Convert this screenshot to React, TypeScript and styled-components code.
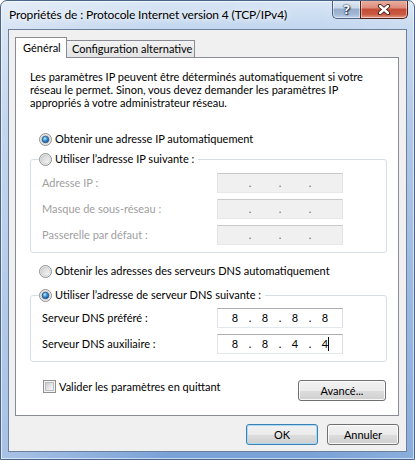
import React, { useId } from "react";
import styled, { createGlobalStyle, css } from "styled-components";

const FONT = `"Segoe UI", Lato, "Noto Sans", sans-serif`;

const Global = createGlobalStyle`
  html, body { margin: 0; padding: 0; background: #ffffff; }
  body { font-family: ${FONT}; }
  #root { width: 415px; height: 460px; }
`;

const Window = styled.div`
  box-sizing: border-box;
  width: 415px;
  height: 460px;
  display: flex;
  flex-direction: column;
  border: 1px solid #4a6488;
  border-radius: 7px 7px 0 0;
  background:
    linear-gradient(to right, rgba(255,255,255,0.35), rgba(255,255,255,0) 40%, rgba(255,255,255,0) 75%, rgba(255,255,255,0.12)),
    linear-gradient(to bottom, #d8e6f5 0px, #c3d7ef 26px, #a7c2e6 120px, #8cb0df 300px, #7aa2d8 460px);
  box-shadow: inset 0 0 0 1px rgba(255,255,255,0.6);
  font-family: ${FONT};
  color: #000;
  overflow: hidden;
`;

const TitleBar = styled.div`
  display: flex;
  align-items: flex-start;
  flex: none;
  height: 28px;
  padding: 0 6px 0 8px;
`;

const Title = styled.div`
  align-self: center;
  font-size: 12px;
  line-height: 16px;
  letter-spacing: -0.15px;
  white-space: nowrap;
  color: #000;
  text-shadow: 0 0 6px #fff, 0 0 10px rgba(255,255,255,0.9);
`;

const CaptionButtons = styled.div`
  display: flex;
  margin-left: auto;
  margin-top: -1px;
`;

const captionBase = css`
  box-sizing: border-box;
  height: 19px;
  display: flex;
  align-items: center;
  justify-content: center;
  border: 1px solid;
  border-top: none;
  box-shadow: inset 0 0 0 1px rgba(255,255,255,0.45);
`;

const HelpButton = styled.div`
  ${captionBase};
  width: 28px;
  border-color: #4f6482;
  border-right: none;
  border-radius: 0 0 0 5px;
  background: linear-gradient(#e3ebf5 0%, #c9d7e9 45%, #95acca 50%, #a2b8d5 80%, #c3d4ea 100%);
  color: #fff;
  font: bold 13px "Noto Sans", sans-serif;
  text-shadow: 0 0 1px #1d2b40, 0 0 2px #1d2b40, 1px 1px 1px #2c3d56;
`;

const CloseButton = styled.div`
  ${captionBase};
  width: 48px;
  border-color: #4f1e18;
  border-radius: 0 0 5px 0;
  background: linear-gradient(#ebb2a4 0%, #dc8b7a 45%, #c54b36 50%, #c95942 80%, #e6a088 100%);
`;

const Client = styled.div`
  flex: 1;
  box-sizing: border-box;
  margin: 0 7px 7px;
  border: 1px solid #6d809b;
  background: #f0f0f0;
  display: flex;
  flex-direction: column;
  padding: 7px 0 0 6px;
`;

const TabStrip = styled.div`
  display: flex;
  align-items: flex-end;
  flex: none;
  height: 20px;
`;

const Tab = styled.div<{ $active?: boolean }>`
  box-sizing: border-box;
  font-size: 11px;
  line-height: 15px;
  white-space: nowrap;
  border: 1px solid #898c95;
  border-bottom: none;
  ${(p) =>
    p.$active
      ? css`
          width: 52px;
          height: 21px;
          margin-bottom: -1px;
          padding: 2px 0 0 7px;
          background: #ffffff;
          position: relative;
          z-index: 1;
        `
      : css`
          width: 128px;
          height: 17px;
          padding: 0 0 0 5px;
          border-left: none;
          background: linear-gradient(#f3f3f3, #e3e3e3);
        `}
`;

const Panel = styled.div`
  box-sizing: border-box;
  flex: none;
  width: 384px;
  height: 359px;
  border: 1px solid #898c95;
  background: #ffffff;
  padding: 12px 0 0 14px;
  display: flex;
  flex-direction: column;
  align-items: flex-start;
`;

const Intro = styled.p`
  margin: 0;
  font-size: 11px;
  line-height: 13px;
  white-space: nowrap;
`;

const Option = styled.label<{ $mt?: number; $ml?: number }>`
  display: flex;
  align-items: center;
  gap: 3px;
  height: 16px;
  margin: ${(p) => p.$mt ?? 0}px 0 0 ${(p) => p.$ml ?? 9}px;
  font-size: 11px;
  line-height: 16px;
  white-space: nowrap;
  cursor: default;
`;

const RadioSvg = styled.svg`
  display: block;
  flex: none;
`;

const Group = styled.fieldset<{ $mt: number; $pt: number }>`
  box-sizing: border-box;
  width: 357px;
  min-width: 0;
  margin: ${(p) => p.$mt}px 0 0 0;
  padding: ${(p) => p.$pt}px 0 7px 8px;
  border: 1px solid #d5dfe5;
  border-radius: 3px;
`;

const Legend = styled.legend`
  margin: 0;
  padding: 0 4px 0 0;
`;

const Rows = styled.div`
  display: flex;
  flex-direction: column;
  gap: 6px;
`;

const FieldRow = styled.div`
  display: flex;
  align-items: center;
  height: 20px;
  padding-left: 3px;
`;

const FieldLabel = styled.span<{ $disabled?: boolean }>`
  width: 175px;
  flex: none;
  font-size: 11px;
  line-height: 16px;
  white-space: nowrap;
  color: ${(p) => (p.$disabled ? "#a0a0a0" : "#000")};
`;

const IpBox = styled.div<{ $disabled?: boolean }>`
  box-sizing: border-box;
  width: 126px;
  height: 20px;
  display: flex;
  align-items: center;
  padding-left: 5px;
  border: 1px solid;
  font-size: 11px;
  line-height: 18px;
  ${(p) =>
    p.$disabled
      ? css`
          border-color: #c9c9c9 #e3e3e3 #e8e8e8 #e3e3e3;
          background: #f0f0f0;
          color: #6d6d6d;
        `
      : css`
          border-color: #abadb3 #dbdfe6 #e3e9ef #e2e3ea;
          background: #ffffff;
          color: #000;
        `}
`;

const Octet = styled.span`
  width: 24px;
  text-align: center;
  white-space: nowrap;
`;

const Dot = styled.span`
  width: 6px;
  text-align: center;
`;

const Caret = styled.span`
  display: inline-block;
  width: 1px;
  height: 14px;
  margin-right: -1px;
  vertical-align: -3px;
  background: #000;
`;

const PanelFooter = styled.div`
  display: flex;
  justify-content: space-between;
  align-items: flex-start;
  width: 356px;
  margin-top: 18px;
`;

const CheckLabel = styled.label`
  display: flex;
  align-items: center;
  gap: 3px;
  height: 13px;
  margin-left: 13px;
  font-size: 11px;
  line-height: 13px;
  white-space: nowrap;
`;

const CheckBox = styled.span`
  box-sizing: border-box;
  width: 13px;
  height: 13px;
  flex: none;
  border: 1px solid #8e8f8f;
  background: #f4f4f4;
  padding: 1px;
  &::after {
    content: "";
    display: block;
    box-sizing: border-box;
    width: 9px;
    height: 9px;
    border: 1px solid #b9bcc1;
    background: linear-gradient(135deg, #cbcdd1 0%, #e6e7e9 55%, #f7f7f7 100%);
  }
`;

const Button = styled.button<{ $default?: boolean; $w: number }>`
  box-sizing: border-box;
  width: ${(p) => p.$w}px;
  height: 21px;
  padding: 0;
  margin: 0;
  font-family: ${FONT};
  font-size: 11px;
  line-height: 19px;
  color: #000;
  border: 1px solid ${(p) => (p.$default ? "#3c7fb1" : "#707070")};
  border-radius: 3px;
  background: linear-gradient(#f2f2f2 0%, #ebebeb 50%, #dddddd 51%, #cfcfcf 100%);
  box-shadow: inset 0 0 0 1px ${(p) => (p.$default ? "#a9dbf6" : "rgba(255,255,255,0.85)")};
`;

const ButtonBar = styled.div`
  display: flex;
  justify-content: flex-end;
  gap: 9px;
  width: 384px;
  margin-top: 8px;
`;

function Radio({ checked }: { checked?: boolean }) {
  const id = useId().replace(/:/g, "");
  return (
    <RadioSvg width="13" height="13" viewBox="0 0 13 13">
      <defs>
        <linearGradient id={`${id}f`} x1="0" y1="0" x2="1" y2="1">
          <stop offset="0" stopColor="#cbcbcb" />
          <stop offset="1" stopColor="#fbfbfb" />
        </linearGradient>
        <radialGradient id={`${id}d`} cx="0.4" cy="0.35" r="0.75">
          <stop offset="0" stopColor="#b8edff" />
          <stop offset="0.45" stopColor="#3b93d4" />
          <stop offset="1" stopColor="#0f3d76" />
        </radialGradient>
      </defs>
      <circle cx="6.5" cy="6.5" r="6" fill="#f5f5f5" stroke="#8e8f8f" />
      <circle cx="6.5" cy="6.5" r="4.6" fill={`url(#${id}f)`} stroke="#c8c8c8" strokeWidth="0.8" />
      {checked && (
        <circle cx="6.5" cy="6.5" r="3.3" fill={`url(#${id}d)`} stroke="#1b4a80" strokeWidth="0.7" />
      )}
    </RadioSvg>
  );
}

function CloseGlyph() {
  return (
    <svg width="14" height="11" viewBox="0 0 14 11">
      <path d="M3 2 L11 9 M11 2 L3 9" stroke="#3a1a14" strokeWidth="4.2" strokeLinecap="round" />
      <path d="M3 2 L11 9 M11 2 L3 9" stroke="#ffffff" strokeWidth="2.4" strokeLinecap="round" />
    </svg>
  );
}

function IpField({ values, disabled, caret }: { values?: string[]; disabled?: boolean; caret?: boolean }) {
  const v = values ?? ["", "", "", ""];
  return (
    <IpBox $disabled={disabled}>
      {v.map((o, i) => (
        <React.Fragment key={i}>
          <Octet>
            {o}
            {caret && i === 3 ? <Caret /> : null}
          </Octet>
          {i < 3 ? <Dot>.</Dot> : null}
        </React.Fragment>
      ))}
    </IpBox>
  );
}

export default function App() {
  return (
    <>
      <Global />
      <Window>
        <TitleBar>
          <Title>Propriétés de : Protocole Internet version 4 (TCP/IPv4)</Title>
          <CaptionButtons>
            <HelpButton>?</HelpButton>
            <CloseButton>
              <CloseGlyph />
            </CloseButton>
          </CaptionButtons>
        </TitleBar>
        <Client>
          <TabStrip>
            <Tab $active>Général</Tab>
            <Tab>Configuration alternative</Tab>
          </TabStrip>
          <Panel>
            <Intro>
              Les paramètres IP peuvent être déterminés automatiquement si votre
              <br />
              réseau le permet. Sinon, vous devez demander les paramètres IP
              <br />
              appropriés à votre administrateur réseau.
            </Intro>
            <Option $mt={22}>
              <Radio checked />
              Obtenir une adresse IP automatiquement
            </Option>
            <Group $mt={4} $pt={6}>
              <Legend>
                <Option $ml={0}>
                  <Radio />
                  Utiliser l’adresse IP suivante :
                </Option>
              </Legend>
              <Rows>
                <FieldRow>
                  <FieldLabel $disabled>Adresse IP :</FieldLabel>
                  <IpField disabled />
                </FieldRow>
                <FieldRow>
                  <FieldLabel $disabled>Masque de sous-réseau :</FieldLabel>
                  <IpField disabled />
                </FieldRow>
                <FieldRow>
                  <FieldLabel $disabled>Passerelle par défaut :</FieldLabel>
                  <IpField disabled />
                </FieldRow>
              </Rows>
            </Group>
            <Option $mt={10}>
              <Radio />
              Obtenir les adresses des serveurs DNS automatiquement
            </Option>
            <Group $mt={8} $pt={5}>
              <Legend>
                <Option $ml={0}>
                  <Radio checked />
                  Utiliser l’adresse de serveur DNS suivante :
                </Option>
              </Legend>
              <Rows>
                <FieldRow>
                  <FieldLabel>Serveur DNS préféré :</FieldLabel>
                  <IpField values={["8", "8", "8", "8"]} />
                </FieldRow>
                <FieldRow>
                  <FieldLabel>Serveur DNS auxiliaire :</FieldLabel>
                  <IpField values={["8", "8", "4", "4"]} caret />
                </FieldRow>
              </Rows>
            </Group>
            <PanelFooter>
              <CheckLabel>
                <CheckBox />
                Valider les paramètres en quittant
              </CheckLabel>
              <Button $w={88}>Avancé...</Button>
            </PanelFooter>
          </Panel>
          <ButtonBar>
            <Button $default $w={72}>OK</Button>
            <Button $w={72}>Annuler</Button>
          </ButtonBar>
        </Client>
      </Window>
    </>
  );
}
